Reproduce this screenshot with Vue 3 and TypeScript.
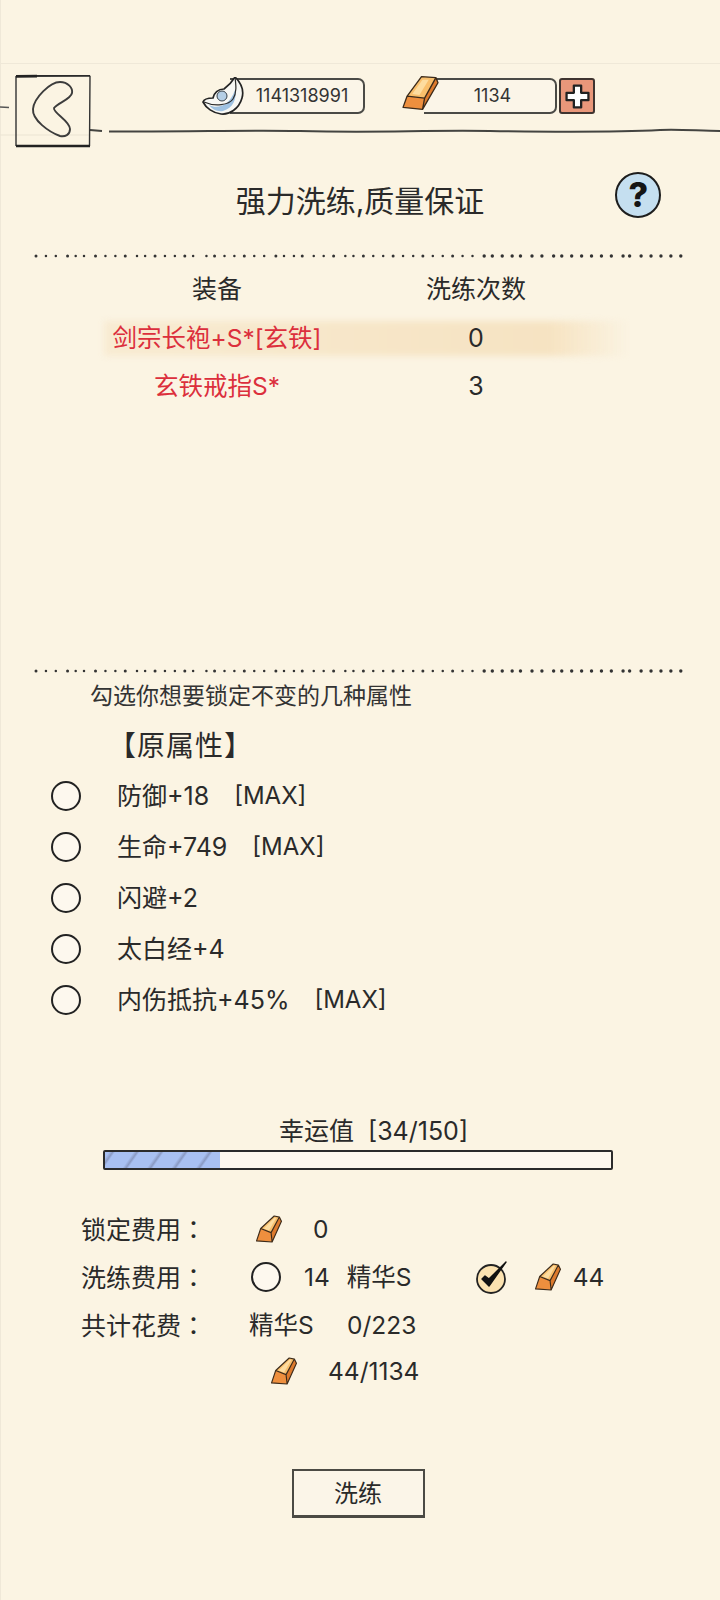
<script setup lang="ts">
interface Attr { name: string; max: boolean }
interface Gear { name: string; count: number; active: boolean }

const gear: Gear[] = [
  { name: '剑宗长袍+S*[玄铁]', count: 0, active: true },
  { name: '玄铁戒指S*', count: 3, active: false },
]
const attrs: Attr[] = [
  { name: '防御+18', max: true },
  { name: '生命+749', max: true },
  { name: '闪避+2', max: false },
  { name: '太白经+4', max: false },
  { name: '内伤抵抗+45%', max: true },
]
const luck = 34
const luckMax = 150
const luckPct = `${(luck / luckMax) * 100}%`

// Slightly irregular hand-stamped dots
const dots = Array.from({ length: 66 }, (_, i) => ({
  x: 36 + i * 9.92 + (i % 7 === 3 ? 1.8 : 0) - (i % 11 === 5 ? 1.6 : 0),
  r: i > 44 ? 1.7 : i % 3 === 0 ? 1.5 : 1.25,
}))
</script>

<template>
  <div class="page">
    <div class="topline"></div>
    <header class="topbar">
      <svg class="hand-line" width="720" height="40" viewBox="0 0 720 40" fill="none">
        <path d="M0 34 L90 34" stroke="#ebe4d3" stroke-width="1" />
        <path d="M0 6 L9 6.5" stroke="#555" stroke-width="1.6" />
        <path d="M90 29 L102 30 M109 30.5 C200 31 230 29 300 30 C380 32 420 29 490 30 C560 31 620 31 660 29 C680 28 700 30 720 30" stroke="#444441" stroke-width="2" />
      </svg>
      <button class="back" type="button" aria-label="返回">
        <svg width="76" height="74" viewBox="0 0 76 74" fill="none">
          <path d="M75 1.8 L74.5 72 M1 2 L1 72" stroke="#333" stroke-width="1.4" />
          <path d="M1 2 L75 1.8" stroke="#2a2a2a" stroke-width="1.8" />
          <path d="M1 2.4 L22 2.2" stroke="#222" stroke-width="2.8" />
          <path d="M1 72 L75 72" stroke="#222" stroke-width="2.6" />
          <path d="M18 35 C19 24 35 8 45 8 C53 8 58 14 57 19 C56 25 43 29 39 34 C38 39 55 47 55 55 C55 61 50 63 45 62 C34 58 17 46 18 35Z" stroke="#3c3c3c" stroke-width="1.9" />
        </svg>
      </button>
      <div class="wallet silver">
        <svg class="wallet-icon icon-silver" width="42" height="38" viewBox="0 0 40 38" fill="none">
          <path d="M32 0 C38 6 41 14 39 21 C36 32 26 38 18 37 C10 36 3 31 0 25 C1 22 6 21 10 21 C11 16 15 12 21 12 C25 9 29 5 32 0Z" fill="#f8f8f4" />
          <path d="M6 28 C14 32 26 30 32 13 C34 22 30 31 20 34 C14 35 9 32 6 28Z" fill="#9fc2e2" />
          <circle cx="19" cy="19" r="5" fill="#b5cfe6" stroke="#39424a" stroke-width="1" />
          <path d="M32 0 C33 8 34 16 30 22 C26 28 12 30 1 25" stroke="#2c2c2c" stroke-width="1.2" />
          <path d="M32 0 C38 6 41 14 39 21 C36 32 26 38 18 37 C10 36 3 31 0 25 C1 22 6 21 10 21 C11 16 15 12 21 12 C25 9 29 5 32 0Z" stroke="#242424" stroke-width="1.7" />
        </svg>
        <span class="pill pill-silver">1141318991</span>
      </div>
      <div class="wallet gold">
        <svg class="wallet-icon icon-gold" width="37" height="36" viewBox="0 0 36 34" fill="none">
          <path d="M5 20 L19 1 L33 2 L22 22Z" fill="#f9bf6c" />
          <path d="M10 18 L20 4 L26 4 L17 19Z" fill="#fddc9f" />
          <path d="M22 22 L33 2 L35 7 L20 33Z" fill="#dd7a2d" />
          <path d="M1 31 L20 33 L22 22 L5 20Z" fill="#ee8f3e" />
          <path d="M1 31 L5 20 L19 1 L33 2 L35 7 L20 33Z M5 20 L22 22 L33 2 M22 22 L20 33" stroke="#3b2a1a" stroke-width="1.3" stroke-linejoin="round" />
        </svg>
        <span class="pill pill-gold">1134</span>
      </div>
      <button class="plus" type="button" aria-label="充值">
        <svg width="25" height="25" viewBox="0 0 24 24">
          <path d="M8.5 1.5 H15.5 V8.5 H22.5 V15.5 H15.5 V22.5 H8.5 V15.5 H1.5 V8.5 H8.5Z" fill="#fff" stroke="#222" stroke-width="2.2" stroke-linejoin="round" />
        </svg>
      </button>
    </header>

    <section class="title-row">
      <span></span>
      <h1 class="title">强力洗练,质量保证</h1>
      <button class="help" type="button" aria-label="帮助">?</button>
    </section>

    <svg class="dots" width="720" height="6" viewBox="0 0 720 6">
      <circle v-for="d in dots" :key="d.x" :cx="d.x" cy="3" :r="d.r" fill="#333" />
    </svg>

    <section class="gear-table">
      <div class="gear-row head">
        <span>装备</span>
        <span>洗练次数</span>
      </div>
      <div v-for="g in gear" :key="g.name" class="gear-row item" :class="{ active: g.active }">
        <span class="gear-name">{{ g.name }}</span>
        <span>{{ g.count }}</span>
      </div>
    </section>

    <svg class="dots second" width="720" height="6" viewBox="0 0 720 6">
      <circle v-for="d in dots" :key="d.x" :cx="d.x" cy="3" :r="d.r" fill="#333" />
    </svg>

    <p class="hint">勾选你想要锁定不变的几种属性</p>
    <h2 class="attr-title">【原属性】</h2>
    <ul class="attrs">
      <li v-for="a in attrs" :key="a.name" class="attr">
        <i class="radio"></i>
        <span class="attr-name">{{ a.name }}</span>
        <span v-if="a.max" class="attr-max">[MAX]</span>
      </li>
    </ul>

    <section class="luck">
      <div class="luck-label">幸运值&nbsp;&nbsp;[{{ luck }}/{{ luckMax }}]</div>
      <div class="bar"><div class="bar-fill" :style="{ width: luckPct }"></div></div>
    </section>

    <section class="costs">
      <div class="cost-row">
        <span class="label">锁定费用<span class="fw">：</span></span>
        <svg class="ingot in-lock" width="28" height="28" viewBox="0 0 26 27" fill="none">
          <use href="#ingot" />
        </svg>
        <span class="v-zero">0</span>
      </div>
      <div class="cost-row">
        <span class="label">洗练费用<span class="fw">：</span></span>
        <i class="radio small"></i>
        <span class="v-14">14</span>
        <span class="v-ess">精华S</span>
        <svg class="tick" width="36" height="36" viewBox="0 0 36 36" fill="none">
          <circle cx="16" cy="20" r="14" fill="#fbe2b0" stroke="#222" stroke-width="1.8" />
          <path d="M7 20 L14 27 L31 3 L14 20 L10 17Z" fill="#111" stroke="#111" stroke-width="1.4" stroke-linejoin="round" />
        </svg>
        <svg class="ingot in-opt" width="28" height="28" viewBox="0 0 26 27" fill="none">
          <use href="#ingot" />
        </svg>
        <span class="v-44">44</span>
      </div>
      <div class="cost-row">
        <span class="label">共计花费<span class="fw">：</span></span>
        <span class="t-ess">精华S</span>
        <span>0/223</span>
      </div>
      <div class="cost-row last">
        <svg class="ingot" width="28" height="28" viewBox="0 0 26 27" fill="none">
          <use href="#ingot" />
        </svg>
        <span class="t-gold">44/1134</span>
      </div>
    </section>

    <div class="action">
      <button class="wash" type="button">洗练</button>
    </div>

    <svg class="defs" width="0" height="0">
      <defs>
        <g id="ingot">
          <path d="M5 13 L18 1 L23 2 L15 17Z" fill="#f9bf6c" />
          <path d="M8 13 L18 3 L20 3 L13 15Z" fill="#fddc9f" />
          <path d="M15 17 L23 2 L25 6 L16 26Z" fill="#dd7a2d" />
          <path d="M1 25 L16 26 L15 17 L5 13Z" fill="#ee8f3e" />
          <path d="M1 25 L5 13 L18 1 L23 2 L25 6 L16 26Z M5 13 L15 17 L23 2 M15 17 L16 26" stroke="#3b2a1a" stroke-width="1.1" stroke-linejoin="round" />
        </g>
      </defs>
    </svg>
  </div>
</template>

<style>
html, body { margin: 0; background: #fbf4e3; }
</style>

<style scoped>
.page {
  position: relative;
  width: 720px;
  height: 1600px;
  overflow: hidden;
  background: #fbf4e3;
  color: #2a2a2a;
  font-family: Inter, "Noto Sans CJK SC", sans-serif;
  font-size: 25px;
  line-height: 34px;
  box-shadow: inset 1px 0 0 #efe8d8;
}
.topline { margin-top: 63px; border-top: 1px solid #efe8d8; }

.topbar {
  position: relative;
  display: flex;
  align-items: flex-start;
  height: 86px;
  padding: 10px 0 0 15px;
  box-sizing: border-box;
}
.hand-line { position: absolute; left: 0; top: 37px; }
.back { position: relative; width: 76px; height: 74px; padding: 0; border: 0; background: transparent; }
.back svg { display: block; }

.wallet { display: flex; align-items: flex-start; height: 38px; margin-top: 3px; }
.wallet-icon { position: relative; z-index: 1; flex: none; }
.icon-gold { margin-top: -2px; }
.pill {
  display: block;
  height: 36px;
  margin-top: 1px;
  line-height: 32px;
  box-sizing: border-box;
  text-align: center;
  font-size: 18px;
  color: #333;
  background: #fbf5e8;
  border-top: 2px solid #4a4a46;
  border-bottom: 2px solid #4a4a46;
  border-right: 2px solid #4a4a46;
  border-radius: 0 7px 7px 0;
}
.silver { margin-left: 111px; }
.pill-silver { width: 135px; margin-left: -14px; padding-left: 11px; }
.gold { margin-left: 37px; }
.pill-gold { width: 133px; margin-left: -15px; padding-left: 6px; }
.plus {
  width: 36px;
  height: 36px;
  margin: 4px 0 0 2px;
  padding: 0;
  display: flex;
  align-items: center;
  justify-content: center;
  box-sizing: border-box;
  background: #e9977a;
  border: 2px solid #3f3430;
  border-radius: 3px;
}

.title-row {
  display: grid;
  grid-template-columns: 1fr auto 1fr;
  align-items: center;
  height: 52px;
  margin-top: 25px;
}
.title { margin: 0; font-size: 30px; font-weight: 400; line-height: 52px; white-space: nowrap; }
.help {
  justify-self: start;
  width: 46px;
  height: 46px;
  margin: -12px 0 0 131px;
  padding: 0;
  border: 2.5px solid #1d1d1d;
  border-radius: 50%;
  background: #c5dff0;
  font: 800 34px/38px Inter, sans-serif;
  color: #151515;
}

.dots { display: block; margin-top: 26px; }
.dots.second { margin-top: 257.5px; }

.gear-table { margin-top: 6px; }
.gear-row {
  position: relative;
  display: grid;
  grid-template-columns: 434px 84px;
  height: 48.5px;
  line-height: 48.5px;
  text-align: center;
  z-index: 0;
}
.gear-row span { white-space: nowrap; justify-self: center; }
.gear-name { color: #dc2f3c; font-size: 24.5px; }
.active::before {
  content: "";
  position: absolute;
  z-index: -1;
  left: 104px;
  top: 7px;
  width: 526px;
  height: 35px;
  background: linear-gradient(90deg, #f8ebd2, #f7e6c8 50%, #f6e3c2 85%, rgba(246, 227, 194, 0));
  filter: blur(3px);
}

.hint { margin: 0; padding: 6px 0 0 90px; font-size: 23px; line-height: 32px; color: #333; white-space: nowrap; }
.attr-title { margin: 0; padding: 16px 0 0 108px; font-size: 28px; letter-spacing: 1px; font-weight: 400; line-height: 36px; }

.attrs { list-style: none; margin: 6px 0 0; padding: 0; }
.attr { display: flex; align-items: center; height: 51px; padding-left: 51px; white-space: nowrap; }
.radio {
  display: block;
  flex: none;
  width: 30px;
  height: 30px;
  box-sizing: border-box;
  border: 2px solid #222;
  border-radius: 50%;
  background: #fdf8ee;
}
.attr-name { margin-left: 36px; }
.attr-max { margin-left: 25px; font-size: 24px; }

.luck { margin-top: 89px; }
.luck-label { height: 34px; line-height: 34px; text-align: center; padding-left: 27px; }
.bar {
  box-sizing: border-box;
  width: 510px;
  height: 20px;
  margin: 2px 0 0 103px;
  border: 2px solid #2b2b2b;
  border-radius: 2px;
  background: #fdf8ee;
}
.bar-fill {
  height: 100%;
  background: repeating-linear-gradient(-55deg, #a8c0f2 0 15px, #8a9ac4 17px, #a8c0f2 20px);
}

.costs { margin-top: 35px; }
.cost-row { display: flex; align-items: center; height: 48px; padding-left: 81px; font-size: 24.5px; white-space: nowrap; }
.cost-row.last { height: 43px; padding-left: 270px; }
.label { width: 168px; flex: none; font-size: 25px; }
.fw { font-family: "Noto Sans CJK TC", sans-serif; }
.ingot { flex: none; }
.in-lock { margin-left: 6px; }
.v-zero { margin-left: 30px; }
.radio.small { margin-left: 2px; }
.v-14 { margin-left: 23px; }
.v-ess { margin-left: 17px; width: 128px; }
.tick { flex: none; }
.in-opt { margin-left: 23px; }
.v-44 { margin-left: 11px; }
.t-ess { width: 98px; }
.t-gold { margin-left: 30px; }

.action { display: flex; justify-content: center; margin-top: 77px; }
.wash {
  width: 133px;
  height: 49px;
  margin-left: -4px;
  padding: 0 0 4px;
  box-sizing: border-box;
  background: #fbf5e8;
  border: 2px solid #4b4a44;
  border-bottom-width: 3px;
  font: 400 24px Inter, "Noto Sans CJK SC", sans-serif;
  color: #2a2a2a;
}
.defs { position: absolute; }
</style>
